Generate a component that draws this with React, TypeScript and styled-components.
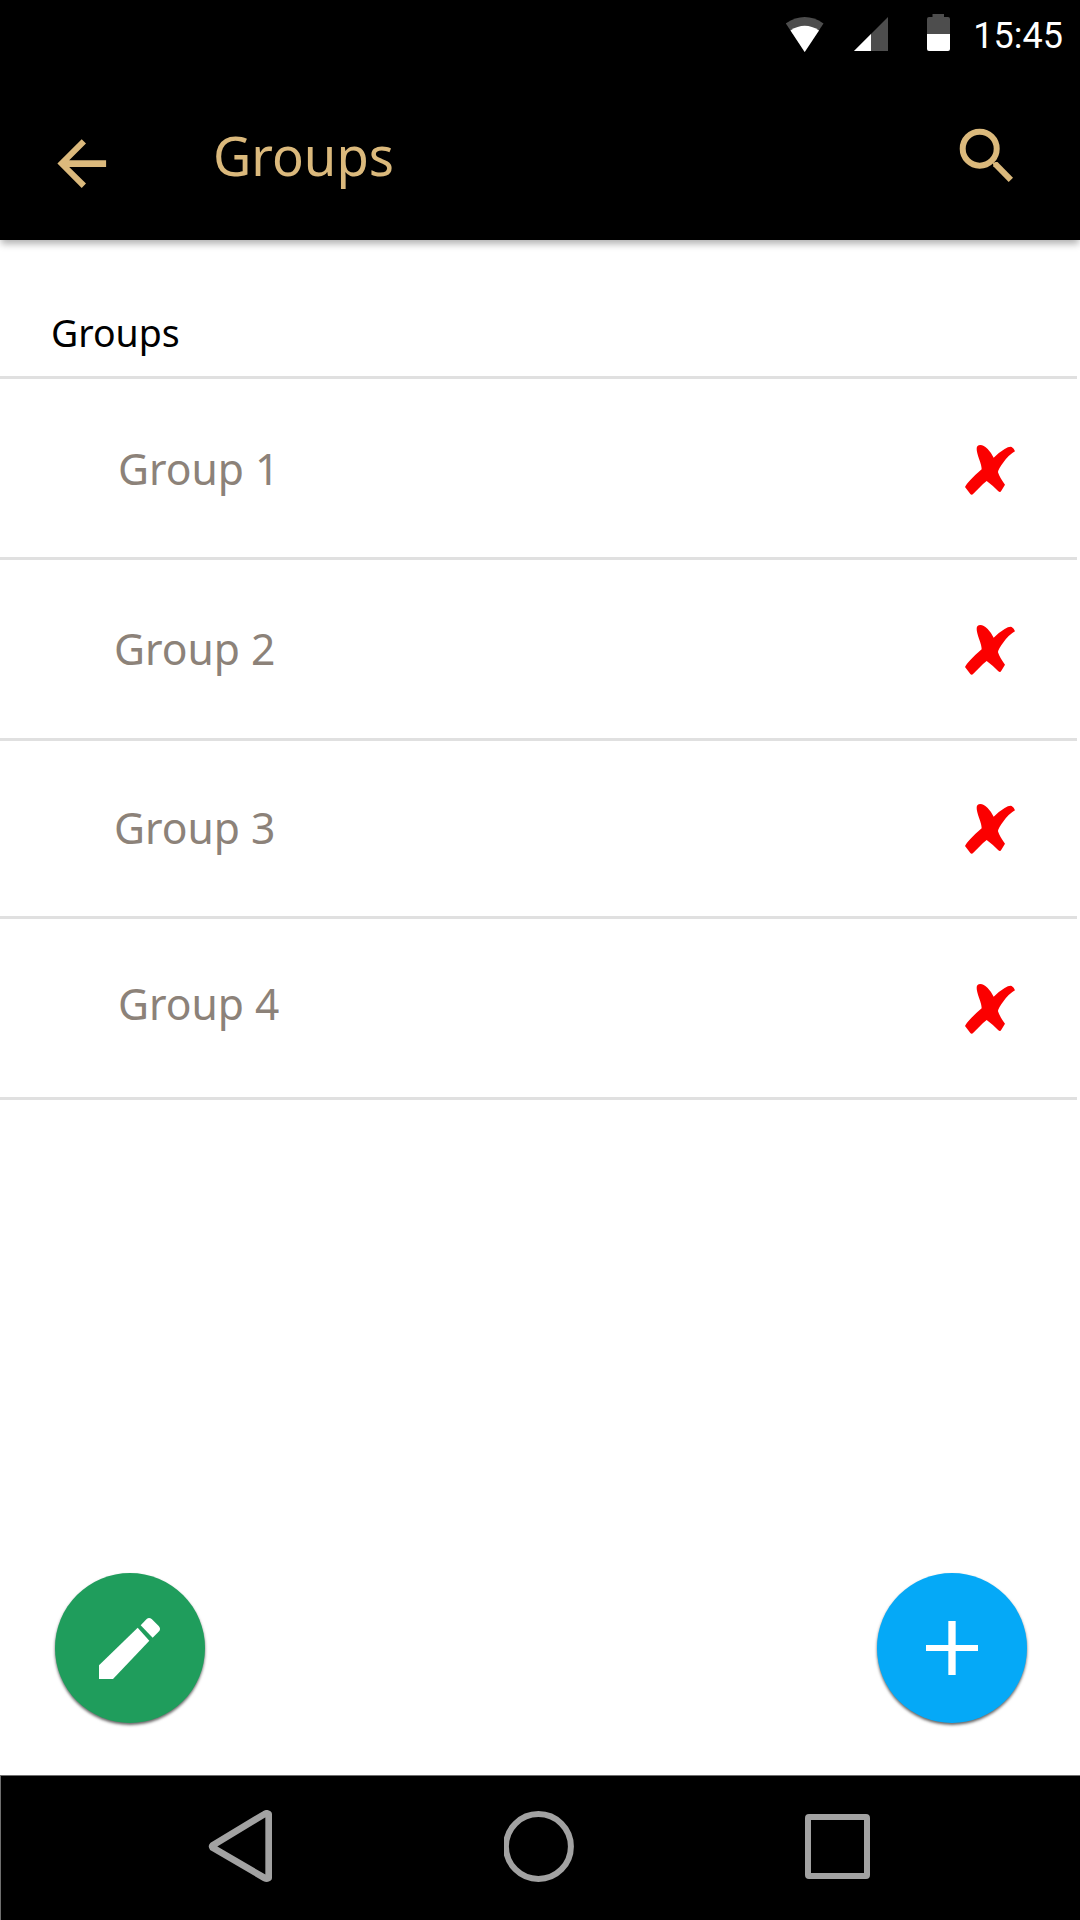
import React from "react";
import styled, { createGlobalStyle } from "styled-components";

const GOLD = "#dbb97c";

const GlobalStyle = createGlobalStyle`
  body { margin: 0; background: #fff; }
  * { box-sizing: border-box; }
  svg { display: block; flex: none; }
`;

const Screen = styled.div`
  width: 1080px;
  height: 1920px;
  display: flex;
  flex-direction: column;
  background: #fff;
  font-family: "Noto Sans", "Open Sans", sans-serif;
  overflow: hidden;
`;

const Header = styled.header`
  height: 240px;
  background: #000;
  box-shadow: 0 5px 7px -1px rgba(0, 0, 0, 0.3);
`;

const StatusBar = styled.div`
  height: 72px;
  padding: 14px 17px 0 0;
  display: flex;
  justify-content: flex-end;
  align-items: flex-start;
`;

const StatusIcon = styled.svg<{ $gap: number }>`
  margin-right: ${(p) => p.$gap}px;
`;

const Clock = styled.span`
  margin-top: 2px;
  color: #fff;
  font: 400 36px/40px Roboto, sans-serif;
`;

const AppBar = styled.div`
  height: 168px;
  padding: 57px 67px 0 57px;
  display: flex;
  align-items: flex-start;
`;

const IconButton = styled.button<{ $top: number }>`
  margin: ${(p) => p.$top}px 0 0;
  padding: 0;
  border: 0;
  background: none;
`;

const Text = styled.span<{ $scale: number }>`
  display: block;
  transform: scaleX(${(p) => p.$scale});
  transform-origin: 0 50%;
  white-space: nowrap;
`;

const Title = styled.h1`
  flex: 1;
  margin: -14px 0 0 106px;
  color: ${GOLD};
  font-size: 55px;
  font-weight: 400;
  line-height: 80px;
`;

const Main = styled.main`
  flex: 1;
  display: flex;
  flex-direction: column;
`;

const Subheader = styled.h2`
  width: 1077px;
  height: 139px;
  margin: 0;
  padding: 67px 0 0 51px;
  border-bottom: 3px solid #e0e0e0;
  color: #000;
  font-size: 39px;
  font-weight: 400;
  line-height: 50px;
`;

const List = styled.ul`
  width: 1077px;
  margin: 0;
  padding: 0;
  list-style: none;
`;

const Row = styled.li<{ $height: number }>`
  height: ${(p) => p.$height}px;
  padding-right: 62px;
  display: flex;
  justify-content: space-between;
  align-items: flex-start;
  border-bottom: 3px solid #e0e0e0;
`;

const Label = styled.div<{ $top: number; $left: number }>`
  padding: ${(p) => p.$top}px 0 0 ${(p) => p.$left}px;
  color: #8c8279;
  font-size: 44px;
  line-height: 60px;
`;

const Actions = styled.div`
  margin-top: auto;
  padding: 0 53px 52px 55px;
  display: flex;
  justify-content: space-between;
`;

const Fab = styled.button<{ $color: string }>`
  width: 150px;
  height: 150px;
  padding: 0;
  border: 0;
  border-radius: 50%;
  background: ${(p) => p.$color};
  box-shadow: 0 2px 3px rgba(0, 0, 0, 0.6);
`;

const NavBar = styled.nav`
  height: 145px;
  padding: 34px 210px 0 207px;
  display: flex;
  justify-content: space-between;
  align-items: flex-start;
  background: #000;
  border-top: 1px solid #6e6e6e;
  border-left: 1px solid #6e6e6e;
`;

const rows = [
  { name: "Group 1", height: 181, top: 59, left: 118, icon: 66 },
  { name: "Group 2", height: 181, top: 58, left: 114, icon: 65 },
  { name: "Group 3", height: 178, top: 56, left: 114, icon: 63 },
  { name: "Group 4", height: 181, top: 54, left: 118, icon: 65 },
];

const Cross = () => (
  <svg width="50" height="50" viewBox="76 75 150 150">
    <path
      fill="#fb0000"
      d="M111 86 Q111 75 122 75 Q132 75 144 87 Q154 97 162 113 Q178 97 195 87 Q208 79 216 81 Q223 85 226 94 Q207 105 192 126 Q175 148 175 157 Q180 173 196 194 L185 212 Q182 219 176 214 Q159 196 141 183 Q130 191 116 206 L101 221 Q96 227 92 222 L76 201 Q79 194 92 180 Q106 165 126 148 Q126 137 118 116 Q111 96 111 86Z"
    />
  </svg>
);

export default function App() {
  return (
    <Screen>
      <GlobalStyle />
      <Header>
        <StatusBar>
          <StatusIcon $gap={30} width="38" height="38" viewBox="786 14 38 38">
            <path fill="#4d4d4d" d="M785.8 23.4Q804.7 10.6 823.5 23.4L804.7 52Z" />
            <path fill="#fff" d="M790.5 30.4Q804.7 21.2 819 30.4L804.7 52Z" />
          </StatusIcon>
          <StatusIcon $gap={39} width="34" height="38" viewBox="854 14 34 38">
            <path fill="#4d4d4d" d="M888 17V51H854Z" />
            <path fill="#fff" d="M871 34V51H854Z" />
          </StatusIcon>
          <StatusIcon $gap={23} width="23" height="38" viewBox="927 14 23 38">
            <path fill="#4d4d4d" d="M932.5 17V14H944V17H948Q950 17 950 19V34H927V19Q927 17 929 17Z" />
            <path fill="#fff" d="M927 34H950V49Q950 51 948 51H929Q927 51 927 49Z" />
          </StatusIcon>
          <Clock>15:45</Clock>
        </StatusBar>
        <AppBar>
          <IconButton $top={10}>
            <svg width="50" height="50" viewBox="57 139 50 50">
              <path
                fill={GOLD}
                d="M57.4 163.6 81.7 139.2 86 143.6 69.2 160.2H106.1V167H69.2L86 183.6 81.7 188Z"
              />
            </svg>
          </IconButton>
          <Title>
            <Text $scale={0.957}>Groups</Text>
          </Title>
          <IconButton $top={-1}>
            <svg width="54" height="55" viewBox="959 128 54 55">
              <circle cx="979.7" cy="148.7" r="17" fill="none" stroke={GOLD} strokeWidth="6" />
              <path fill={GOLD} d="M993 163 995.5 162H997.5L1013 177.7 1008.7 182 993.3 166.3Z" />
            </svg>
          </IconButton>
        </AppBar>
      </Header>
      <Main>
        <Subheader>
          <Text $scale={0.96}>Groups</Text>
        </Subheader>
        <List>
          {rows.map((r) => (
            <Row key={r.name} $height={r.height}>
              <Label $top={r.top} $left={r.left}>
                <Text $scale={0.968}>{r.name}</Text>
              </Label>
              <IconButton $top={r.icon}>
                <Cross />
              </IconButton>
            </Row>
          ))}
        </List>
        <Actions>
          <Fab $color="#1f9d5c">
            <svg width="150" height="150" viewBox="75 69 450 450">
              <path fill="#fff" d="M207 346 323 233 358 272 249 387H207Z" />
              <path fill="#fff" d="M332 226 350 207Q357 201 365 207L386 228Q393 236 388 243L368 263Z" />
            </svg>
          </Fab>
          <Fab $color="#05a9f7">
            <svg width="150" height="150" viewBox="81 69 450 450">
              <path fill="#fff" d="M295 213H317V285H384V303H317V375H295V303H228V285H295Z" />
            </svg>
          </Fab>
        </Actions>
      </Main>
      <NavBar>
        <svg width="66" height="73" viewBox="83 150 198 219">
          <path
            d="M265 162V354Q260 358 253 354L97 263Q94 259 97 256L253 162Q259 158 265 162Z"
            fill="none"
            stroke="#a2a2a2"
            strokeWidth="20"
            strokeLinejoin="round"
          />
        </svg>
        <svg width="72" height="73" viewBox="504 1810 72 73">
          <circle cx="538.4" cy="1846.5" r="32.5" fill="none" stroke="#a2a2a2" strokeWidth="6" />
        </svg>
        <svg width="65" height="73" viewBox="805 1810 65 73">
          <rect x="808" y="1817" width="59" height="59" rx="1" fill="none" stroke="#a2a2a2" strokeWidth="6" strokeLinejoin="round" />
        </svg>
      </NavBar>
    </Screen>
  );
}
